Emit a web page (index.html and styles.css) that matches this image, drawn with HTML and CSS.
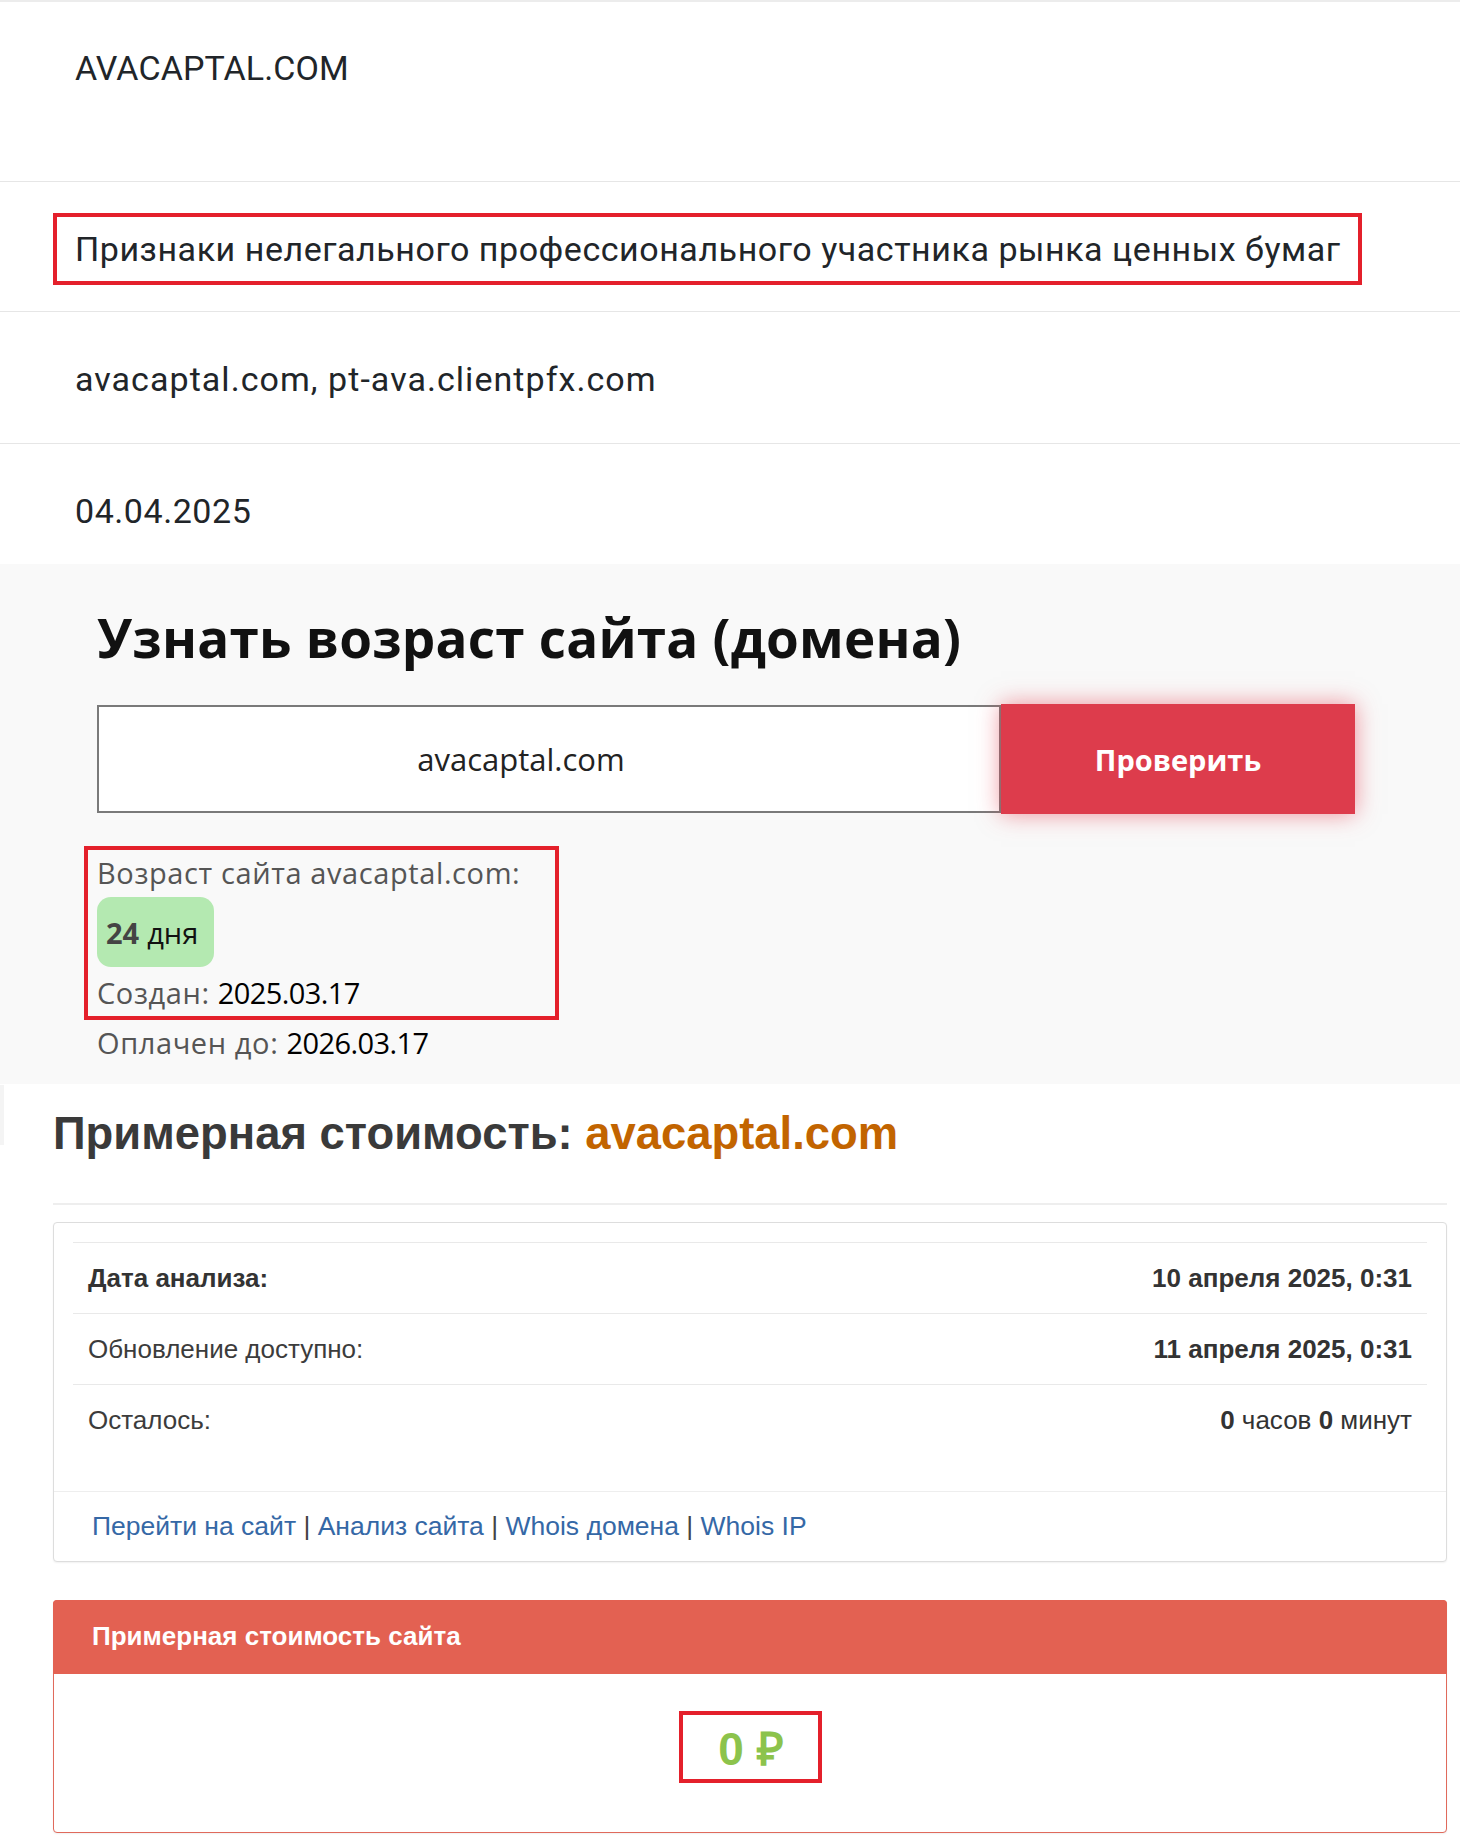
FILE: index.html
```html
<!DOCTYPE html>
<html lang="ru">
<head>
<meta charset="utf-8">
<title>AVACAPTAL.COM</title>
<link rel="stylesheet" href="styles.css">
</head>
<body>
<div class="list">
  <div class="row row-first">AVACAPTAL.COM</div>
  <div class="row row-mark"><span class="mark-box">Признаки нелегального профессионального участника рынка ценных бумаг</span></div>
  <div class="row row-domains">avacaptal.com, pt-ava.clientpfx.com</div>
  <div class="row row-last">04.04.2025</div>
</div>

<section class="age">
  <h2 class="age-title">Узнать возраст сайта (домена)</h2>
  <div class="age-form">
    <input class="age-input" type="text" value="avacaptal.com" readonly>
    <button class="age-btn" type="button">Проверить</button>
  </div>
  <div class="age-result">
    <div class="age-line">Возраст сайта avacaptal.com:</div>
    <div class="badge"><b>24</b> дня</div>
    <div class="age-line age-line-created">Создан: <span class="val">2025.03.17</span></div>
  </div>
  <div class="age-line age-paid">Оплачен до: <span class="val">2026.03.17</span></div>
</section>

<section class="cost">
  <h2 class="cost-title">Примерная стоимость: <span class="dom">avacaptal.com</span></h2>
  <hr class="cost-hr">
  <div class="panel">
    <div class="panel-body">
      <table class="info">
        <tr><th>Дата анализа:</th><td><b>10 апреля 2025, 0:31</b></td></tr>
        <tr><td class="lbl">Обновление доступно:</td><td><b>11 апреля 2025, 0:31</b></td></tr>
        <tr><td class="lbl">Осталось:</td><td><b>0</b> часов <b>0</b> минут</td></tr>
      </table>
    </div>
    <div class="panel-footer"><a href="#">Перейти на сайт</a> | <a href="#">Анализ сайта</a> | <a href="#">Whois домена</a> | <a href="#">Whois IP</a></div>
  </div>
  <div class="panel panel-red">
    <div class="panel-heading">Примерная стоимость сайта</div>
    <div class="panel-body price-body"><span class="price-box"><span class="price">0 ₽</span></span></div>
  </div>
</section>
</body>
</html>
```

FILE: styles.css
```css
* { box-sizing: border-box; }
html, body { margin: 0; padding: 0; background: #fff; }
body { width: 1460px; }

/* ---------- list rows ---------- */
.list {
  font-family: Roboto, "Liberation Sans", sans-serif;
  font-size: 34px;
  line-height: 40px;
  color: #212529;
  letter-spacing: 0.55px;
  border-top: 2px solid #ececec;
}
.row {
  padding: 47px 20px 44px 75px;
  border-bottom: 1px solid #e6e6e6;
}
.row-first { padding-top: 46px; padding-bottom: 93px; letter-spacing: 0.1px; }
.row-mark { padding-top: 31px; padding-bottom: 26px; }
.row-domains { letter-spacing: 1.05px; }
.mark-box {
  display: inline-block;
  margin-left: -22px;
  padding: 12px 17px 12px 18px;
  border: 4px solid #e4202b;
}
.row-last { border-bottom: 0; padding-bottom: 33px; }

/* ---------- age section ---------- */
.age {
  background: #f9f9f9;
  padding: 43px 0 21px 97px;
  font-family: "Open Sans", "Noto Sans", sans-serif;
}
.age-title {
  margin: 0 0 35px;
  font-size: 53px;
  line-height: 62px;
  font-weight: 700;
  color: #111;
  letter-spacing: 0.2px;
}
.age-form {
  display: flex;
  align-items: center;
  width: 1258px;
}
.age-input {
  width: 904px;
  height: 108px;
  border: 2px solid #7a7a7a;
  background: #fff;
  font-family: "Open Sans", sans-serif;
  font-size: 31px;
  color: #222;
  text-align: center;
  padding: 0 56px 0 0;
  outline: none;
}
.age-btn {
  width: 354px;
  height: 110px;
  border: 0;
  background: #dd3c4c;
  color: #fff;
  font-family: "Open Sans", sans-serif;
  font-size: 29px;
  font-weight: 700;
  box-shadow: 0 0 22px rgba(228, 60, 76, 0.55);
  position: relative;
  padding: 0;
}
.age-result {
  display: inline-block;
  margin: 32px 0 0 -13px;
  width: 475px;
  border: 4px solid #e4202b;
  padding: 3px 9px 3px 9px;
}
.age-line {
  font-size: 29px;
  line-height: 40px;
  color: #555;
  white-space: nowrap;
  letter-spacing: 0.6px;
}
.age-line .val { color: #000; font-weight: 500; letter-spacing: -0.6px; }
.badge {
  display: inline-flex;
  align-items: center;
  width: 117px;
  height: 70px;
  margin-top: 4px;
  padding-left: 9px;
  border-radius: 14px;
  background: #b4e9b1;
  font-size: 29px;
  color: #111;
}
.badge b { color: #444; font-weight: 700; margin-right: 8px; }
.age-line-created { margin-top: 6px; }
.age-paid { margin-top: 3px; }

/* ---------- cost section ---------- */
.cost {
  font-family: "Liberation Sans", Arial, sans-serif;
  color: #333;
  padding: 25px 13px 8px 53px;
  position: relative;
}
.cost::before {
  content: "";
  position: absolute;
  left: 0; top: 1px;
  width: 4px; height: 60px;
  background: #f4f4f4;
}
.cost-title {
  margin: 0;
  font-size: 45.4px;
  line-height: 50px;
  font-weight: 700;
  color: #3a3a3a;
}
.cost-title .dom { color: #c26400; }
.cost-hr {
  margin: 44px 0 17px;
  border: 0;
  border-top: 2px solid #eeeeee;
}
.panel {
  border: 1px solid #dddddd;
  border-radius: 4px;
  background: #fff;
  box-shadow: 0 1px 2px rgba(0, 0, 0, 0.06);
}
.panel-body { padding: 19px 19px 35px; }
.info {
  width: 100%;
  border-collapse: collapse;
  font-size: 26px;
}
.info th, .info td {
  height: 71px;
  padding: 0 15px;
  border-top: 1px solid #e9e9e9;
  text-align: right;
  vertical-align: middle;
  color: #333;
  font-weight: 400;
}
.info th { text-align: left; font-weight: 700; }
.info td.lbl { text-align: left; color: #3c3c3c; }
.info b { font-weight: 700; }
.panel-footer {
  border-top: 1px solid #eeeeee;
  height: 70px;
  display: flex;
  align-items: center;
  padding-left: 38px;
  font-size: 26.5px;
  color: #444;
  white-space: pre;
}
.panel-footer a { color: #3568a6; text-decoration: none; }

.panel-red {
  margin-top: 38px;
  border-color: #e06a5c;
}
.panel-heading {
  background: #e36152;
  height: 74px;
  margin: -1px -1px 0;
  border-radius: 4px 4px 0 0;
  display: flex;
  align-items: center;
  padding-left: 39px;
  color: #fff;
  font-size: 26px;
  font-weight: 700;
}
.price-body {
  padding: 37px 15px 49px;
  text-align: center;
}
.price-box {
  display: inline-flex;
  align-items: center;
  justify-content: center;
  width: 143px;
  height: 72px;
  border: 4px solid #e4202b;
}
.price {
  font-size: 46px;
  font-weight: 700;
  color: #8cc34c;
  margin-left: 2px;
}
```
